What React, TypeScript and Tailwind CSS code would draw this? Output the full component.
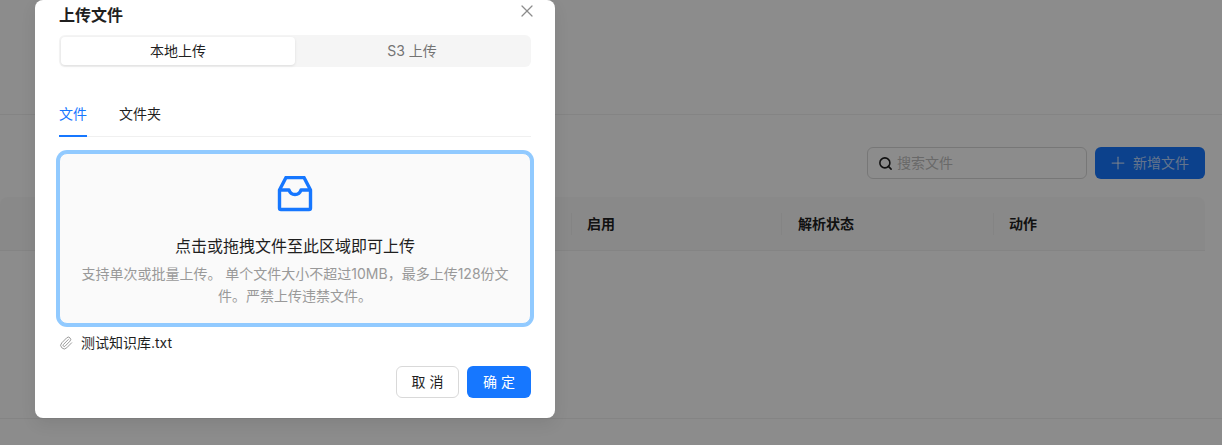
import { Paperclip, Plus, Search, X } from "lucide-react"

const cjk = "font-['Inter','Noto_Sans_CJK_SC',sans-serif]"

function InboxIcon() {
  return (
    <svg width="36" height="36" viewBox="0 0 36 36" fill="none" stroke="#1677ff" strokeWidth="3.400" strokeLinejoin="round">
      <path d="M9 1.500h18l6.500 12.500v18a1.500 1.500 0 0 1-1.500 1.500h-28a1.500 1.500 0 0 1-1.500-1.500v-18z" />
      <path d="M2.500 14h9.500c1 3 3 4.500 6 4.500s5-1.500 6-4.500h9.500" />
    </svg>
  )
}

function Background() {
  return (
    <div className="flex h-[445px] flex-col bg-white">
      <div className="h-[115px] shrink-0 border-b border-[#f0f0f0]" />

      <div className="flex justify-end gap-2 pt-8 pr-[17px]">
        <div className="flex h-8 w-[220px] items-center gap-1 rounded-md border border-[#d9d9d9] pl-[10px]">
          <Search size={15} strokeWidth={2.500} className="text-[#1f1f1f]" />
          <span className="text-sm text-[#bfbfbf]">搜索文件</span>
        </div>
        <div className="flex h-8 w-[110px] items-center justify-end gap-[5px] rounded-md bg-[#1677ff] pr-4">
          <Plus size={20} strokeWidth={1.500} className="text-white/70" />
          <span className="text-sm text-white/70">新增文件</span>
        </div>
      </div>

      <div className="mt-[18px] mr-[17px] flex h-[54px] items-center rounded-t-lg border-b border-[#f0f0f0] bg-[#fafafa] text-sm font-semibold text-[#1f1f1f]">
        <div className="w-[571px] shrink-0" />
        <div className="w-[210px] shrink-0 border-l border-[#f0f0f0] pl-[15px] leading-[22px]">启用</div>
        <div className="w-[212px] shrink-0 border-l border-[#f0f0f0] pl-4 leading-[22px]">解析状态</div>
        <div className="flex-1 border-l border-[#f0f0f0] pl-[15px] leading-[22px]">动作</div>
      </div>

      <div className="mt-[167px] border-t border-[#f0f0f0]" />
    </div>
  )
}

function UploadModal() {
  return (
    <div className="absolute bottom-[27px] left-[35px] w-[520px] rounded-lg bg-white px-6 pb-5 shadow-[0_6px_16px_rgba(0,0,0,0.08)]">
      <button className="absolute top-px right-[18px] text-[#8c8c8c]">
        <X size={20} strokeWidth={1.500} />
      </button>

      <h2 className="pt-[3px] text-base leading-6 font-semibold text-[#1f1f1f]">上传文件</h2>

      <div className="mt-2 flex h-8 rounded-md bg-[#f5f5f5] p-0.5 text-sm">
        <div className="flex w-[234px] items-center justify-center rounded bg-white text-[#1f1f1f] shadow-[0_1px_3px_rgba(0,0,0,0.1)]">
          本地上传
        </div>
        <div className="flex flex-1 items-center justify-center text-[#737373]">S3 上传</div>
      </div>

      <div className="mt-6 flex gap-8 border-b border-[#f0f0f0] text-sm">
        <div className="-mb-px border-b-2 border-[#1677ff] pt-3 pb-2.5 leading-[22px] text-[#1677ff]">文件</div>
        <div className="pt-3 pb-2.5 leading-[22px] text-[#1f1f1f]">文件夹</div>
      </div>

      <div className="mt-4 flex h-[171px] flex-col items-center rounded-lg border border-[#91caff] bg-[#fafafa] px-4 pt-[22px] text-center shadow-[0_0_0_3px_#91caff]">
        <InboxIcon />
        <p className="mt-[22px] text-base leading-6 text-[#1f1f1f]">点击或拖拽文件至此区域即可上传</p>
        <p className="mt-[5px] text-sm leading-[22px] text-[#999999]">
          支持单次或批量上传。 单个文件大小不超过10MB，最多上传128份文件。严禁上传违禁文件。
        </p>
      </div>

      <div className="mt-2 flex h-[22px] items-center gap-2 text-sm text-[#1f1f1f]">
        <Paperclip size={14} strokeWidth={1.500} className="text-[#8c8c8c]" />
        <span>测试知识库.txt</span>
      </div>

      <div className="mt-3 flex justify-end gap-2 text-sm">
        <button className="h-8 w-[63px] rounded-md border border-[#d9d9d9] bg-white text-[#1f1f1f]">取 消</button>
        <button className="h-8 w-16 rounded-md bg-[#1677ff] text-white">确 定</button>
      </div>
    </div>
  )
}

export default function App() {
  return (
    <div className={`relative h-[445px] overflow-hidden ${cjk}`}>
      <Background />
      <div className="absolute inset-0 bg-black/45" />
      <UploadModal />
    </div>
  )
}
